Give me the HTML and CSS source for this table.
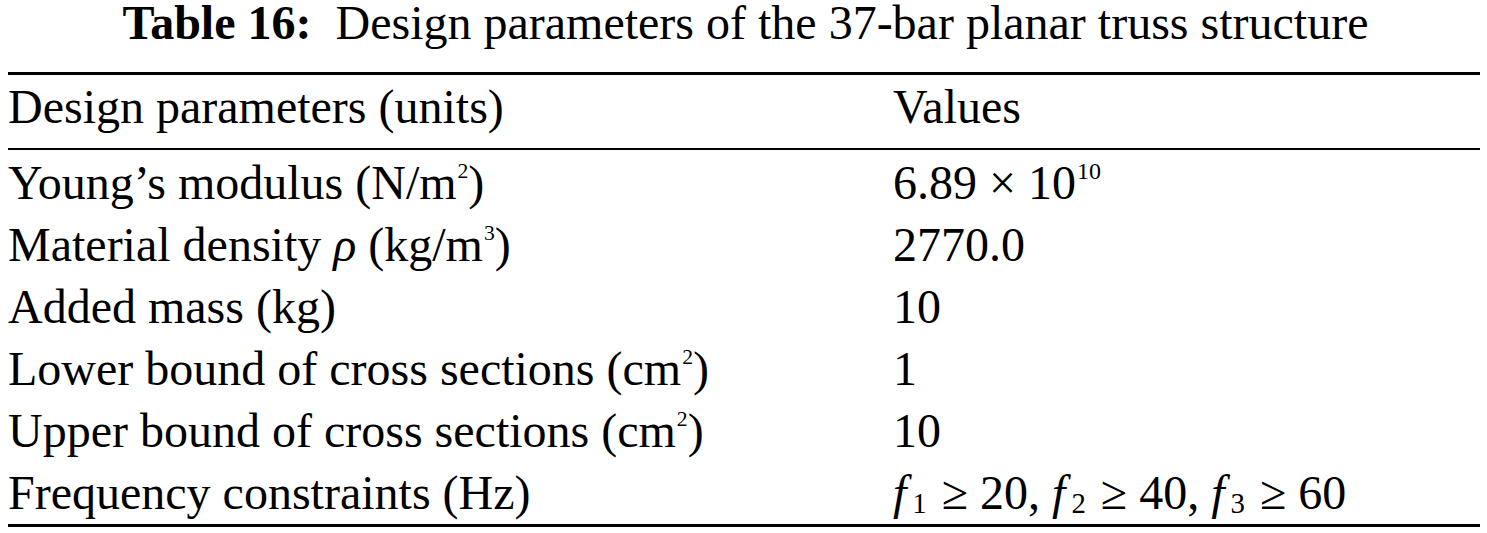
FILE: index.html
```html
<!DOCTYPE html>
<html lang="en">
<head>
  <meta charset="UTF-8" />
  <meta name="viewport" content="width=device-width, initial-scale=1" />
  <title>Table 16 - 37-bar planar truss</title>
  <link rel="stylesheet" href="styles.css">
</head>
<body>
  <div class="caption"><b>Table 16:</b>&nbsp; Design parameters of the 37-bar planar truss structure</div>

  <table class="params">
    <thead>
      <tr>
        <th class="name">Design parameters (units)</th>
        <th class="value">Values</th>
      </tr>
    </thead>
    <tbody>
      <tr>
        <td class="name">Young’s modulus (N/m<sup>2</sup>)</td>
        <td class="value">6.89 × 10<sup class="exp">10</sup></td>
      </tr>
      <tr>
        <td class="name">Material density <i>ρ</i> (kg/m<sup>3</sup>)</td>
        <td class="value">2770.0</td>
      </tr>
      <tr>
        <td class="name">Added mass (kg)</td>
        <td class="value">10</td>
      </tr>
      <tr>
        <td class="name">Lower bound of cross sections (cm<sup>2</sup>)</td>
        <td class="value">1</td>
      </tr>
      <tr>
        <td class="name">Upper bound of cross sections (cm<sup>2</sup>)</td>
        <td class="value">10</td>
      </tr>
      <tr>
        <td class="name">Frequency constraints (Hz)</td>
        <td class="value"><i>f</i><sub>1</sub> ≥ 20, <i>f</i><sub>2</sub> ≥ 40, <i>f</i><sub>3</sub> ≥ 60</td>
      </tr>
    </tbody>
  </table>
</body>
</html>
```

FILE: styles.css
```css
body {
  margin: 0;
  background: #fff;
  color: #000;
  font-family: "Liberation Serif", "Times New Roman", serif;
  font-size: 48px;
}

.caption {
  text-align: center;
  line-height: 46px;
  padding-left: 4px;
  margin-bottom: 26px;
}

.params {
  margin: 0 7px 0 8px;
  width: 1472px;
  border-collapse: collapse;
  border-top: 3px solid #000;
  border-bottom: 3px solid #000;
}

.params th,
.params td {
  padding: 0;
  font-weight: normal;
  text-align: left;
  line-height: 62px;
  white-space: nowrap;
}

.params thead tr {
  border-bottom: 2px solid #000;
}

.params thead th {
  padding-top: 1px;
  padding-bottom: 10px;
}

.params tbody tr:first-child td {
  padding-top: 2px;
}

.name {
  width: 885px;
}

sup,
sub {
  line-height: 0;
  vertical-align: 0;
  position: relative;
}

sup {
  font-size: 0.45em;
  top: -0.95em;
  margin-left: 1px;
}

sup.exp {
  font-size: 0.5em;
  top: -0.85em;
}

sub {
  font-size: 0.6em;
  top: 0.15em;
  margin: 0 3px 0 6px;
}
```
